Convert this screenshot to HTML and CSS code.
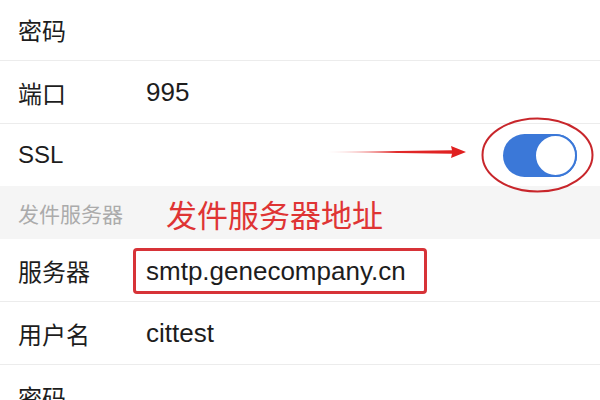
FILE: index.html
```html
<!DOCTYPE html>
<html lang="zh-CN">
<head>
<meta charset="utf-8">
<link rel="stylesheet" href="styles.css">
</head>
<body>
<div class="list">
  <div class="row first"><span class="label">密码</span></div>
  <div class="row"><span class="label">端口</span><span class="value">995</span></div>
  <div class="row ssl">
    <span class="label">SSL</span>
    <span class="toggle"><span class="knob"></span></span>
    <svg class="marks" width="600" height="84" viewBox="0 0 600 84">
      <defs>
        <linearGradient id="ag" x1="0" x2="1" y1="0" y2="0">
          <stop offset="0" stop-color="#f08080" stop-opacity="0.3"/>
          <stop offset="0.5" stop-color="#e02a2a"/>
          <stop offset="1" stop-color="#e01e1e"/>
        </linearGradient>
      </defs>
      <polygon points="327,36 452,34.2 451,30 466,36 451,42 452,37.8" fill="url(#ag)"/>
      <ellipse cx="537.5" cy="39" rx="55" ry="36.5" fill="none" stroke="#c8262b" stroke-width="2"/>
    </svg>
  </div>
  <div class="section"><span class="section-title">发件服务器</span><span class="note">发件服务器地址</span></div>
  <div class="row"><span class="label">服务器</span><span class="value boxed">smtp.genecompany.cn</span></div>
  <div class="row"><span class="label">用户名</span><span class="value">cittest</span></div>
  <div class="row"><span class="label">密码</span></div>
</div>
</body>
</html>
```

FILE: styles.css
```css
html, body {
  margin: 0;
  padding: 0;
  background: #ffffff;
  overflow: hidden;
}
body {
  width: 600px;
  height: 400px;
  font-family: "Liberation Sans", "Noto Sans CJK SC", sans-serif;
  color: #1d1d1d;
}
.list {
  display: flex;
  flex-direction: column;
  margin-top: -2px;
}
.row {
  height: 62px;
  border-bottom: 1px solid #ececec;
  display: flex;
  align-items: center;
  padding-left: 18px;
  position: relative;
  flex-shrink: 0;
}
.label {
  width: 128px;
  font-size: 24px;
  flex-shrink: 0;
}
.value {
  font-size: 26px;
}
.boxed {
  display: inline-block;
  border: 3px solid #d73338;
  border-radius: 4px;
  height: 40px;
  line-height: 40px;
  padding: 0 18px 0 10px;
  margin-left: -13px;
  margin-top: 1px;
}
.ssl {
  border-bottom: none;
}
.toggle {
  margin-left: auto;
  margin-right: 23px;
  width: 74px;
  height: 43px;
  border-radius: 22px;
  background: #3b78d8;
  display: flex;
  justify-content: flex-end;
  align-items: center;
  box-sizing: border-box;
}
.knob {
  width: 43px;
  height: 43px;
  border-radius: 50%;
  background: #ffffff;
  border: 2px solid #3b78d8;
  box-sizing: border-box;
}
.marks {
  position: absolute;
  left: 0;
  top: -8px;
  pointer-events: none;
}
.section {
  height: 53px;
  background: #f5f5f5;
  display: flex;
  align-items: center;
  padding-left: 18px;
  flex-shrink: 0;
}
.section-title {
  font-size: 21px;
  color: #ababab;
  width: 148px;
}
.note {
  font-size: 31px;
  color: #df3434;
  margin-top: 2px;
}
```
